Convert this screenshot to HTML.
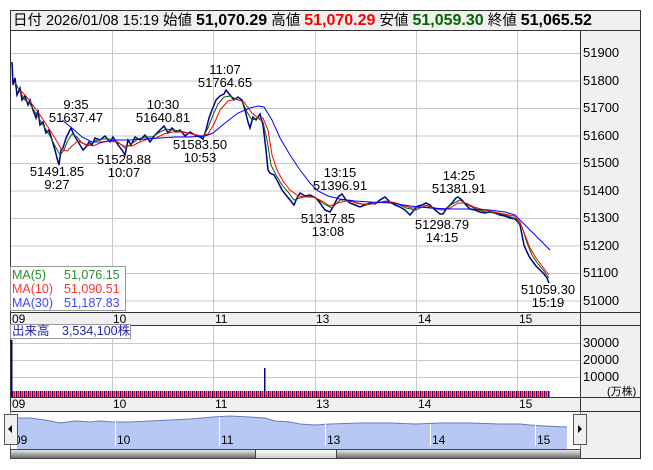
<!DOCTYPE html>
<html><head><meta charset="utf-8"><style>
*{margin:0;padding:0;box-sizing:border-box}
body{width:653px;height:470px;background:#fff;position:relative;font-family:"Liberation Sans","Noto Sans CJK JP",sans-serif;overflow:hidden}
.hdr{position:absolute;left:10px;top:10px;width:631px;height:21px;border:1px solid #333;background:#f0f0f0;font-size:14.5px;line-height:19px;padding-left:2px;white-space:nowrap;color:#000}
.hdr b{font-size:16px}
svg{position:absolute;left:0;top:0}
svg text{font-family:"Liberation Sans","Noto Sans CJK JP",sans-serif}
</style></head><body>
<div class="hdr">日付 2026/01/08 15:19 始値 <b>51,070.29</b> 高値 <b style="color:#f00">51,070.29</b> 安値 <b style="color:#060">51,059.30</b> 終値 <b>51,065.52</b></div>
<svg width="653" height="470" viewBox="0 0 653 470">
<rect x="580" y="31" width="61" height="380" fill="#f0f0f0"/>
<rect x="10" y="312" width="631" height="14" fill="#f0f0f0"/>
<rect x="10" y="397" width="631" height="14" fill="#f0f0f0"/>
<rect x="580" y="411" width="61" height="47" fill="#f0f0f0"/>
<g stroke="#c8c8c8" stroke-width="1">
<path d="M10 53.5H580M10 81H580M10 108.5H580M10 136H580M10 163.5H580M10 191H580M10 218.5H580M10 246H580M10 273.5H580M10 301H580"/>
<path d="M112.5 31V312M213.5 31V312M315.5 31V312M416.5 31V312M517.5 31V312"/>
<path d="M10 343.5H580M10 360.5H580M10 377.5H580"/>
<path d="M112.5 326V397M213.5 326V397M315.5 326V397M416.5 326V397M517.5 326V397"/>
</g>
<g stroke="#333" fill="none" stroke-width="1">
<rect x="10.5" y="30.5" width="630" height="428"/>
<path d="M580.5 31V411M10 312.5H641M10 325.5H641M10 397.5H641M10 411.5H641"/>
</g>
<g font-size="13" fill="#000">
<text x="583" y="57">51900</text><text x="583" y="85">51800</text><text x="583" y="112">51700</text><text x="583" y="140">51600</text><text x="583" y="167">51500</text><text x="583" y="195">51400</text><text x="583" y="222">51300</text><text x="583" y="250">51200</text><text x="583" y="277">51100</text><text x="583" y="305">51000</text>
<text x="583" y="347">30000</text><text x="583" y="364">20000</text><text x="583" y="381">10000</text><text x="607" y="395" font-size="11">(万株)</text>
<g font-size="12"><text x="12" y="323">09</text><text x="113" y="323">10</text><text x="215" y="323">11</text><text x="316" y="323">13</text><text x="418" y="323">14</text><text x="519" y="323">15</text>
<text x="12" y="408">09</text><text x="113" y="408">10</text><text x="215" y="408">11</text><text x="316" y="408">13</text><text x="418" y="408">14</text><text x="519" y="408">15</text></g>
</g>
<polyline fill="none" stroke="#00008b" stroke-width="1.5" points="12,62 13,85 15,78 17,95 20,88 22,100 25,96 28,105 30,100 33,110 36,118 38,110 40,125 43,122 46,133 49,130 52,140 55,150 57,158 59,165 61,150 63,148 66,138 69,132 71,128 74,135 77,140 80,145 83,150 86,147 89,142 92,145 95,138 100,140 105,136 110,142 113,137 118,145 122,150 125,155 128,140 131,145 135,137 140,140 145,135 150,142 155,135 160,130 164,126 168,133 172,128 176,132 180,130 185,136 190,132 195,135 200,137 203,139 206,130 209,118 212,110 216,100 220,96 224,94 226,90 230,95 234,100 238,97 242,100 245,110 248,122 250,128 253,117 256,120 260,114 263,125 266,150 268,170 270,173 274,175 278,182 282,190 286,195 290,200 294,205 297,198 300,193 305,196 310,195 316,198 320,203 325,210 330,212 334,205 338,197 342,194 346,200 350,203 355,205 360,207 365,205 370,203 375,204 380,200 385,197 390,202 395,205 400,207 405,210 410,215 414,210 418,206 422,205 426,203 430,205 435,210 440,214 443,214 447,208 452,203 456,198 458,197 462,200 466,205 470,209 475,210 480,212 485,213 490,212 495,213 500,215 505,216 510,218 515,219 518,222 520,225 522,235 524,245 527,252 530,258 533,262 536,266 540,270 544,274 547,278 549,283"/>
<polyline fill="none" stroke="#006400" stroke-width="1" points="15,82 20,92 25,100 30,104 35,112 40,120 45,128 50,136 55,146 60,155 64,150 68,140 72,134 77,137 82,143 88,146 95,141 102,139 110,139 118,142 125,148 130,145 138,139 145,137 152,137 160,132 166,129 172,130 180,131 188,133 196,135 203,137 208,128 213,115 218,104 224,97 230,96 236,99 242,101 247,112 252,120 258,118 263,122 267,140 271,165 276,175 282,185 288,192 294,200 300,198 308,196 316,198 324,204 332,208 340,200 348,200 356,203 366,205 376,203 386,201 396,203 406,208 416,210 426,205 436,209 444,210 452,204 460,200 468,205 476,209 486,212 496,213 506,215 516,219 522,227 527,243 532,255 538,264 544,271 549,278"/>
<polyline fill="none" stroke="#f00" stroke-width="1" points="20,90 26,96 32,104 38,112 44,121 50,130 56,140 62,150 67,151 72,146 78,141 85,144 93,146 100,143 108,141 116,142 124,146 132,146 140,142 148,139 156,138 164,134 172,132 182,132 192,134 202,136 208,134 214,124 220,110 228,101 236,99 244,102 252,113 258,118 263,118 268,130 272,155 277,170 283,181 290,190 298,196 306,197 314,197 322,201 330,206 338,203 346,201 354,202 362,204 372,204 382,202 392,202 402,205 412,208 422,207 432,207 442,210 450,208 458,203 466,203 474,207 484,210 494,212 504,214 514,216 520,222 525,235 530,248 536,258 542,266 549,275"/>
<polyline fill="none" stroke="#0000ff" stroke-width="1" points="62,120 72,128 82,137 92,142 102,142 115,140 130,140 145,139 160,138 175,137 190,137 205,136 213,133 225,123 238,113 250,108 258,106 264,107 272,120 280,138 290,155 300,170 310,183 318,191 328,196 340,199 355,201 370,202 390,203 410,206 430,208 450,209 470,209 490,210 505,212 515,215 522,222 530,230 540,240 550,250"/>
<g font-size="13" fill="#000" text-anchor="middle">
<text x="76" y="109">9:35</text><text x="76" y="122">51637.47</text>
<text x="57" y="176">51491.85</text><text x="57" y="189">9:27</text>
<text x="124" y="164">51528.88</text><text x="124" y="177">10:07</text>
<text x="163" y="109">10:30</text><text x="163" y="122">51640.81</text>
<text x="200" y="149">51583.50</text><text x="200" y="162">10:53</text>
<text x="225" y="74">11:07</text><text x="225" y="87">51764.65</text>
<text x="340" y="177">13:15</text><text x="340" y="190">51396.91</text>
<text x="328" y="223">51317.85</text><text x="328" y="236">13:08</text>
<text x="459" y="180">14:25</text><text x="459" y="193">51381.91</text>
<text x="442" y="229">51298.79</text><text x="442" y="242">14:15</text>
<text x="548" y="294">51059.30</text><text x="548" y="307">15:19</text>
</g>
<rect x="10.5" y="266.5" width="115" height="44" fill="#fff" stroke="#999"/>
<g font-size="12.5"><text x="12" y="279" fill="#2e8b2e">MA(5)</text><text x="64" y="279" fill="#2e8b2e">51,076.15</text>
<text x="12" y="293" fill="#f33">MA(10)</text><text x="64" y="293" fill="#f33">51,090.51</text>
<text x="12" y="307" fill="#44f">MA(30)</text><text x="64" y="307" fill="#44f">51,187.83</text></g>
<defs><pattern id="vb" width="4" height="10" patternUnits="userSpaceOnUse"><rect width="1.5" height="10" fill="#00008b"/><rect x="2" width="1.5" height="10" fill="#f00"/></pattern></defs>
<rect x="11" y="391" width="539" height="6" fill="url(#vb)"/>
<rect x="11" y="340" width="1.5" height="57" fill="#00008b"/>
<rect x="264" y="368" width="1.5" height="29" fill="#00008b"/>
<rect x="10.5" y="324.5" width="120" height="14" fill="#fff" stroke="#999"/>
<text x="12" y="335" font-size="12.5" fill="#22a">出来高　3,534,100株</text>
<polygon fill="#b8c8f4" points="17,418 30,418 45,420 60,423 75,421 90,422 100,421 113,422 130,422 150,421 170,420 190,419 213,417 230,416 250,417 265,418 275,421 290,422 300,424 315,425 330,424 360,423 390,423 416,424 440,423 470,423 500,424 520,424 530,425 545,426 567,427 567,449 17,449"/>
<polyline fill="none" stroke="#6a7ab8" stroke-width="1" points="17,418 30,418 45,420 60,423 75,421 90,422 100,421 113,422 130,422 150,421 170,420 190,419 213,417 230,416 250,417 265,418 275,421 290,422 300,424 315,425 330,424 360,423 390,423 416,424 440,423 470,423 500,424 520,424 530,425 545,426 567,427"/>
<g stroke="#fff"><path d="M115.5 419V446M219.5 417V446M325.5 424V446M430.5 424V446M535.5 424V446"/></g>
<g font-size="12" fill="#000"><text x="14" y="444">09</text><text x="117" y="444">10</text><text x="221" y="444">11</text><text x="327" y="444">13</text><text x="432" y="444">14</text><text x="537" y="444">15</text></g>
<path d="M10.5 411V458M580.5 411V458" stroke="#39c"/>
<rect x="4.5" y="414.5" width="13" height="30" fill="#f0f0f0" stroke="#555"/><polygon points="12,425 8,429 12,433" fill="#000"/>
<rect x="573.5" y="414.5" width="13" height="30" fill="#f0f0f0" stroke="#555"/><polygon points="578,425 582,429 578,433" fill="#000"/>
<defs><linearGradient id="sb" x1="0" y1="0" x2="0" y2="1"><stop offset="0" stop-color="#eee"/><stop offset="1" stop-color="#666"/></linearGradient>
<linearGradient id="th" x1="0" y1="0" x2="0" y2="1"><stop offset="0" stop-color="#fff"/><stop offset="1" stop-color="#ccc"/></linearGradient></defs>
<rect x="10.5" y="449.5" width="570" height="9" fill="url(#sb)" stroke="#444"/>
<rect x="255.5" y="449.5" width="81" height="9" fill="url(#th)" stroke="#444"/>
</svg>
</body></html>
